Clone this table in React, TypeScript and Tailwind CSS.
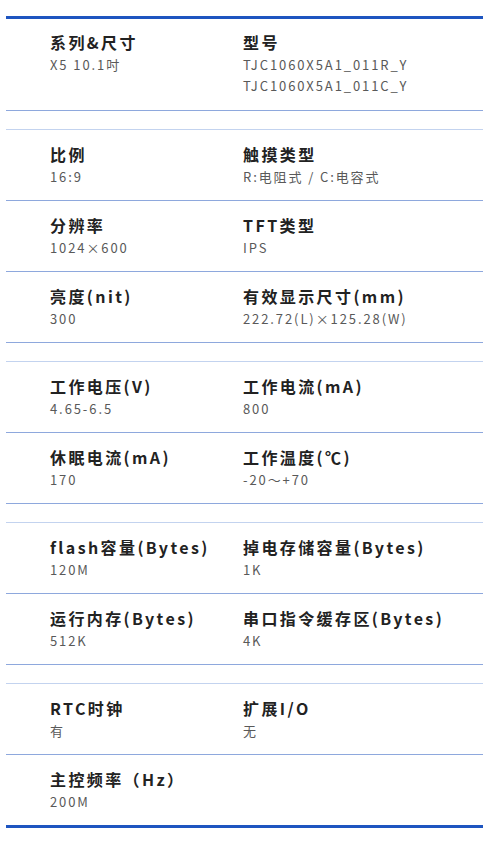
import React from 'react';

type Spec = { label: string; value: string[] };
type Row = [Spec, Spec?];

const groups: Row[][] = [
  [
    [
      { label: '系列&尺寸', value: ['X5 10.1吋'] },
      { label: '型号', value: ['TJC1060X5A1_011R_Y', 'TJC1060X5A1_011C_Y'] },
    ],
  ],
  [
    [
      { label: '比例', value: ['16:9'] },
      { label: '触摸类型', value: ['R:电阻式 / C:电容式'] },
    ],
    [
      { label: '分辨率', value: ['1024×600'] },
      { label: 'TFT类型', value: ['IPS'] },
    ],
    [
      { label: '亮度(nit)', value: ['300'] },
      { label: '有效显示尺寸(mm)', value: ['222.72(L)×125.28(W)'] },
    ],
  ],
  [
    [
      { label: '工作电压(V)', value: ['4.65-6.5'] },
      { label: '工作电流(mA)', value: ['800'] },
    ],
    [
      { label: '休眠电流(mA)', value: ['170'] },
      { label: '工作温度(℃)', value: ['-20～+70'] },
    ],
  ],
  [
    [
      { label: 'flash容量(Bytes)', value: ['120M'] },
      { label: '掉电存储容量(Bytes)', value: ['1K'] },
    ],
    [
      { label: '运行内存(Bytes)', value: ['512K'] },
      { label: '串口指令缓存区(Bytes)', value: ['4K'] },
    ],
  ],
  [
    [
      { label: 'RTC时钟', value: ['有'] },
      { label: '扩展I/O', value: ['无'] },
    ],
    [{ label: '主控频率（Hz）', value: ['200M'] }],
  ],
];

function Cell({ spec }: { spec?: Spec }) {
  if (!spec) return <div />;
  return (
    <div>
      <div className="text-[16px] leading-[23px] font-bold tracking-[2.4px] text-[#222]">
        {spec.label}
      </div>
      {spec.value.map((v) => (
        <div key={v} className="text-[13px] leading-[21px] font-normal tracking-[1.9px] text-[#595959]">
          {v}
        </div>
      ))}
    </div>
  );
}

export default function App() {
  return (
    <div
      className="bg-white min-h-[842px] px-[6px] pt-[16px]"
      style={{ fontFamily: '"Noto Sans CJK SC", "Noto Sans", sans-serif' }}
    >
      {groups.map((rows, gi) => {
        const first = gi === 0;
        const last = gi === groups.length - 1;
        return (
          <div
            key={gi}
            className={`border-b ${
              first ? 'border-t-[3px] border-t-[#1e55c0]' : 'border-t border-t-[#c3d3ef] mt-[18px]'
            } ${last ? 'border-b-[3px] border-b-[#1e55c0]' : 'border-b-[#8ea8dd]'}`}
          >
            {rows.map((row, ri) => (
              <div
                key={ri}
                className={`grid grid-cols-[193px_1fr] pl-[44px] ${
                  first ? 'pt-[12px] pb-[14px]' : 'pt-[13px] pb-[13px]'
                } ${ri < rows.length - 1 ? 'border-b border-[#8ea8dd]' : ''}`}
              >
                <Cell spec={row[0]} />
                <Cell spec={row[1]} />
              </div>
            ))}
          </div>
        );
      })}
    </div>
  );
}
